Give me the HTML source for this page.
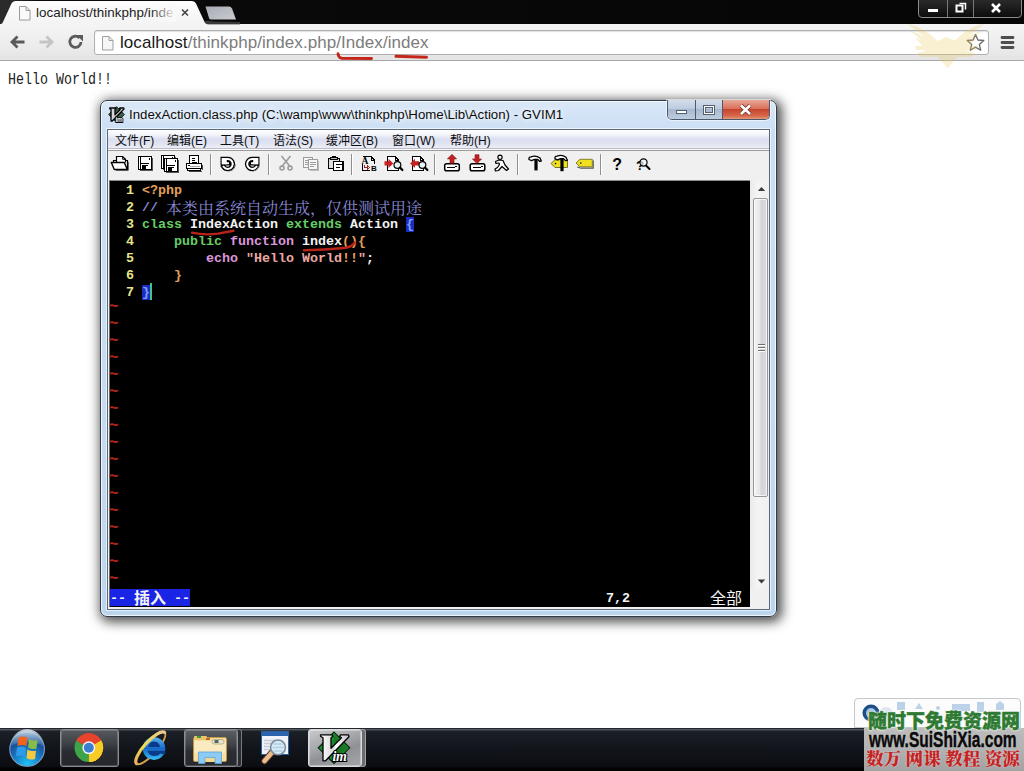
<!DOCTYPE html>
<html><head><meta charset="utf-8"><title>localhost/thinkphp/index.php/Index/index</title>
<style>
*{box-sizing:border-box;margin:0;padding:0}
html,body{width:1024px;height:771px;overflow:hidden;background:#fff}
body{position:relative;font-family:"Liberation Sans","Noto Sans CJK SC",sans-serif}
.a{position:absolute}
svg{position:absolute;overflow:visible}
/* chrome */
#ctitle{left:0;top:0;width:1024px;height:25px;background:linear-gradient(90deg,#2b2b2b 0,#2a2a2a 12px,#0a0a0a 40px,#050505 100%)}
#ctool{left:0;top:24px;width:1024px;height:37px;background:linear-gradient(#f5f5f5,#ececec 60%,#e4e4e4);border-bottom:1px solid #a9a9a9}
#tabtxt{left:36px;top:4px;font-size:13.4px;letter-spacing:.05px;line-height:17px;color:#1c1c1c;white-space:nowrap;width:140px;overflow:hidden}
#tabfade{left:150px;top:3px;width:26px;height:19px;background:linear-gradient(90deg,rgba(249,249,249,0),#f9f9f9)}
#omni{left:94px;top:30px;width:895px;height:25px;background:#fff;border:1px solid #b0b0b0;border-radius:3px;box-shadow:inset 0 1px 1px rgba(0,0,0,.12)}
#url{left:120px;top:33px;font-size:17px;letter-spacing:.06px;color:#1a1a1a;white-space:nowrap;line-height:20px}
#url span{color:#7c7c7c}
#hello{left:8px;top:71px;font-family:"Liberation Mono",monospace;font-size:16px;line-height:18px;color:#222;white-space:pre;transform:scaleX(.8333);transform-origin:0 0}
#wc{left:918px;top:-1px;width:104px;height:19px;border:1px solid #8c8c8c;border-radius:0 0 4px 4px;background:linear-gradient(#2a2a2a,#0c0c0c)}
#wc i{position:absolute;top:0;width:1px;height:17px;background:#7a7a7a}
</style></head><body>
<div id="ctitle" class="a"></div>
<div id="ctool" class="a"></div>
<svg id="tab" style="left:0;top:0" width="240" height="26" viewBox="0 0 240 26"><defs><linearGradient id="tg" x1="0" y1="0" x2="0" y2="1"><stop offset="0" stop-color="#fdfdfd"/><stop offset="1" stop-color="#f3f3f3"/></linearGradient><linearGradient id="ng" x1="0" y1="0" x2="1" y2="1"><stop offset="0" stop-color="#a9acb3"/><stop offset="1" stop-color="#c9cbd1"/></linearGradient></defs><path d="M200 25 Q204 19 214 21.500 L240 22 L240 25Z" fill="#6a6a6a" opacity=".5"/><path d="M0 25 L2.500 23 L11.500 3.500 Q12.500 1 15.500 1 L192 1 Q195 1 196 3.500 L205 23 L208 25 Z" fill="url(#tg)"/><path d="M205.5 6.5 L229 6.5 Q231 6.5 232 8.5 L236 19.5 L211 19.5 Q209.5 19.5 209 18 Z" fill="url(#ng)"/><path d="M182 9.5 L188 15.5 M188 9.5 L182 15.5" stroke="#444" stroke-width="1.6" fill="none"/><path d="M19.5 6.5 h6.5 l4 4 v9.5 h-10.5 z" fill="#fafafa" stroke="#9a9a9a"/><path d="M26 6.5 v4 h4" fill="none" stroke="#9a9a9a"/></svg>
<div id="tabtxt" class="a">localhost/thinkphp/inde</div>
<div id="tabfade" class="a"></div>
<div id="wc" class="a"><i style="left:28px"></i><i style="left:54px"></i></div>
<svg style="left:918px;top:0" width="104" height="18" viewBox="0 0 104 18"><rect x="10" y="9" width="10" height="3" fill="#fff"/><path d="M38.500 5.500 h6 v6 h-6 z" fill="none" stroke="#fff" stroke-width="2"/><path d="M41.500 3.500 h6 v6" fill="none" stroke="#fff" stroke-width="1.500"/><path d="M74 4 L82 12 M82 4 L74 12" stroke="#fff" stroke-width="2.600"/></svg>
<div id="omni" class="a"></div>
<svg style="left:0;top:24px" width="1024" height="37" viewBox="0 24 1024 37">
 <path d="M12 42 H24.500 M17.500 36.500 L12 42 L17.500 47.500" fill="none" stroke="#5a5a5a" stroke-width="2.800"/>
 <path d="M39.500 42 H52 M46.500 36.500 L52 42 L46.500 47.500" fill="none" stroke="#c4c4c4" stroke-width="2.800"/>
 <path d="M81 42 A5.600 5.600 0 1 1 79.500 38" fill="none" stroke="#5a5a5a" stroke-width="2.800"/><path d="M76.500 35 L83 35 L83 41.500 Z" fill="#5a5a5a"/>
 <path d="M102.500 36.500 h6.500 l4 4 v9.500 h-10.500 z" fill="#f6f6f6" stroke="#a0a0a0"/><path d="M109 36.500 v4 h4" fill="none" stroke="#a0a0a0"/>
 <path d="M975.500 34.500 L977.900 40 L983.800 40.500 L979.300 44.400 L980.700 50.200 L975.500 47.100 L970.300 50.200 L971.700 44.400 L967.200 40.500 L973.100 40 Z" fill="#fff" stroke="#6a6a6a" stroke-width="1.300" stroke-linejoin="round"/>
 <path d="M1002 37.500 h11 M1002 42.500 h11 M1002 47.500 h11" stroke="#4e4e4e" stroke-width="2.800" stroke-linecap="round"/>
</svg>
<svg style="left:900px;top:18px" width="96" height="54" viewBox="900 18 96 54"><g fill="#ecc858" opacity=".27"><path d="M907 24 Q926 27 942 46 L937 52 Q924 34 907 24Z"/><path d="M910 31 Q924 33 937 50 L931 53 Q922 39 910 31Z"/><path d="M915 38 Q926 40 933 52 L926 53 Q922 44 915 38Z"/><path d="M985 23.500 Q966 27 950 46 L955 52 Q968 34 985 23.500Z"/><path d="M982 31 Q968 33 955 50 L961 53 Q970 39 982 31Z"/><path d="M977 38 Q966 40 959 52 L966 53 Q970 44 977 38Z"/><path d="M915 46 H978 L976 50 H960 L975 53 L972 57 H920 L917 53 L932 50 H916Z"/><path d="M936 42 L946 37 L958 42 L958 56 L947.500 68 L937 56Z"/></g></svg><div id="url" class="a">localhost<span>/thinkphp/index.php/Index/index</span></div>
<svg style="left:330px;top:50px" width="110" height="14" viewBox="330 50 110 14"><path d="M338 53.800 Q338.500 57.600 341.500 58.200 L371.500 58.500" fill="none" stroke="#c4261a" stroke-width="2.900" stroke-linecap="round"/><path d="M396 56.200 L426.500 57.300" fill="none" stroke="#c4261a" stroke-width="3" stroke-linecap="round"/></svg>
<div id="hello" class="a">Hello World!!</div>

<style>
#shadow{left:100px;top:100px;width:677px;height:517px;border-radius:7px;box-shadow:2.6px 2.6px 12px 2.2px rgba(0,0,0,.7)}
#win{left:100px;top:100px;width:677px;height:517px;border-radius:7px;border:1px solid #2f3b4a;background:linear-gradient(#dbe8f7 0,#d2e3f6 14px,#cddff4 29px,#c6dbf1 60%,#bcd5ee 100%);box-shadow:inset 0 0 0 1px rgba(255,255,255,.75)}
#wtitle{left:129px;top:106px;font-size:12px;line-height:18px;transform:scaleX(1.105);transform-origin:0 0;color:#0c0c0c;white-space:nowrap;text-shadow:0 0 5px #fff,0 0 8px #fff}
#cbtn{left:667px;top:100px;width:103px;height:20px;border:1px solid #4d5a6b;border-top:none;border-radius:0 0 5px 5px;overflow:hidden;box-shadow:0 0 0 1px rgba(255,255,255,.55)}
#cbtn b{position:absolute;top:0;height:19px;display:block}
#client{left:108px;top:130px;width:661px;height:479px;background:#f0f0f0;box-shadow:0 0 0 1px #5a6878,0 0 0 2px rgba(255,255,255,.6)}
#menubar{left:108px;top:130px;width:661px;height:21px;background:linear-gradient(#ffffff 0,#f1f3f9 5px,#dcdff0 9px,#dde1f0 12px,#e6e9f4 16px,#eceef6 18px,#bcbcc8 18px,#bcbcc8 19px,#fafafa 19px,#fafafa 20px,#9c9c9c 20px)}
.mi{position:absolute;top:133px;font-size:12px;color:#0e0e0e;white-space:nowrap;line-height:17px;font-family:"Liberation Sans","Noto Sans CJK SC",sans-serif}
#tbar{left:108px;top:151px;width:661px;height:30px;background:#f0f0f0}
.sep{position:absolute;top:154px;width:2px;height:21px;border-left:1px solid #8e8e8e;border-right:1px solid #fff}
#editor{left:109px;top:180px;width:641px;height:427px;background:#000;border-top:1px solid #8a8a8a;border-left:1px solid #6e6e6e}
#code{left:110px;top:182px;font-family:"Liberation Mono",monospace;font-weight:bold;font-size:13.33px;line-height:17px;color:#f2f2f2;white-space:pre}
#code .n{color:#e6e68a}
#code .o{color:#e2a05c}
#code .c{color:#8a8ad6}
#code .g{color:#66cc66}
#code .p{color:#dc96dc}
#code .s{color:#eaa8a0}
#code .m{background:#1c2cc0;color:#7aa0ff}
#code .k{display:inline-block;width:16px;font-family:"Noto Serif CJK SC","Noto Sans CJK SC",serif;font-weight:400;font-size:16px;line-height:17px;text-align:center;vertical-align:top}
#tildes{left:109px;top:299px;font-family:"Liberation Mono",monospace;font-weight:bold;font-size:16px;line-height:17px;color:#b0261c;white-space:pre}
#mode{left:110px;top:589px;width:80px;height:17px;background:#1a24e4}
.st{position:absolute;top:590px;font-family:"Liberation Mono","Noto Sans CJK SC",monospace;font-weight:bold;font-size:13.33px;line-height:17px;color:#f4f4f4;white-space:pre}
.st .k{position:relative;top:-1px;display:inline-block;width:16px;font-family:"Noto Sans CJK SC",sans-serif;font-weight:400;font-size:16px;line-height:17px;text-align:center;vertical-align:top}
#vsb{left:750px;top:181px;width:19px;height:408px;background:linear-gradient(90deg,#e9e9e9,#f4f4f4 40%,#f0f0f0)}
#thumb{left:753px;top:198px;width:15px;height:299px;border:1px solid #979797;border-radius:2px;background:linear-gradient(90deg,#f4f4f4,#e6e6e8 45%,#d2d3d8 55%,#dcdde2);box-shadow:inset 0 0 0 1px rgba(255,255,255,.7)}
</style>
<div id="shadow" class="a"></div>
<div id="win" class="a"></div>
<svg style="left:108px;top:106px" width="17" height="17" viewBox="-1 -1 34 34"><path d="M16 0.300 L31.700 16 L16 31.700 L0.300 16 Z" fill="#3c5c44" stroke="#10201a" stroke-width="2"/><path d="M2.500 3 H14 L15 4.500 L13 6 V16.500 L23.500 6 L21.500 4.500 L22.500 3 H30.500 L31 5 L7.500 29 H5 V6 L2.500 4.500 Z" fill="#d4d4d4" stroke="#000" stroke-width="2.600" stroke-linejoin="round"/><text x="14" y="30" font-family="Liberation Sans,sans-serif" font-weight="bold" font-size="13" fill="#fff" stroke="#000" stroke-width="3.500" paint-order="stroke" stroke-linejoin="round" letter-spacing="-.5">im</text></svg><div id="wtitle" class="a">IndexAction.class.php (C:\wamp\www\thinkphp\Home\Lib\Action) - GVIM1</div>
<div id="cbtn" class="a"><b style="left:0;width:28px;background:linear-gradient(#d3deeb,#bccbde 45%,#a7b9d0 50%,#becddf);border-right:1px solid #4d5a6b"></b><b style="left:28px;width:27px;background:linear-gradient(#d3deeb,#bccbde 45%,#a7b9d0 50%,#becddf);border-right:1px solid #4d5a6b"></b><b style="left:55px;width:47px;background:linear-gradient(#e8a797,#d9705a 45%,#c6452c 50%,#d8694c 85%,#e29a7c)"></b></div>
<svg style="left:667px;top:100px" width="103" height="20" viewBox="0 0 103 20"><rect x="9.500" y="10.500" width="10" height="3" fill="#fff" stroke="#55606e"/><rect x="36.500" y="5.500" width="11" height="9" fill="none" stroke="#55606e"/><rect x="37.500" y="6.500" width="9" height="7" fill="none" stroke="#fff"/><rect x="38.500" y="7.500" width="7" height="5" fill="none" stroke="#55606e"/><path d="M74 5.500 L83 14 M83 5.500 L74 14" stroke="#6b3328" stroke-width="4.200"/><path d="M74 5.500 L83 14 M83 5.500 L74 14" stroke="#fff" stroke-width="2.600"/></svg>
<div id="client" class="a"></div>
<div id="menubar" class="a"></div>
<span class="mi" style="left:115px">文件(F)</span><span class="mi" style="left:167px">编辑(E)</span><span class="mi" style="left:220px">工具(T)</span><span class="mi" style="left:273px">语法(S)</span><span class="mi" style="left:326px">缓冲区(B)</span><span class="mi" style="left:392px">窗口(W)</span><span class="mi" style="left:450px">帮助(H)</span>
<div id="tbar" class="a"></div>
<i class="sep" style="left:210px"></i><i class="sep" style="left:268px"></i><i class="sep" style="left:351px"></i><i class="sep" style="left:434px"></i><i class="sep" style="left:517px"></i><i class="sep" style="left:600px"></i>
<!--ICONS_START--><svg style="left:108px;top:150px" width="662" height="31" viewBox="108 150 662 31" shape-rendering="crispEdges"><g shape-rendering="auto"><path d="M128.300 162 V170.300 H116" stroke="#555" stroke-width="1" fill="none"/><path d="M113.500 163 V160.500 H116.500" fill="none" stroke="#000" stroke-width="1.200"/><path d="M125.500 160.500 H127.500 V169.500 H125" fill="#fff" stroke="#000" stroke-width="1.200"/><path d="M116.500 162.500 V156.500 H122.700 L125.500 159.300 V162.500" fill="#fff" stroke="#000" stroke-width="1.200"/><path d="M122.700 156.500 V159.300 H125.500" fill="none" stroke="#000" stroke-width="1"/><path d="M111.300 162.500 H124.300 L127.300 169.500 H114.300 Z" fill="#fff" stroke="#000" stroke-width="1.400" stroke-linejoin="round"/></g><g><rect x="138.5" y="156.5" width="13" height="13" fill="#fff" stroke="#000"/><path d="M140.5 157 V169 M141 163.5 H149" stroke="#000" fill="none"/><rect x="142" y="165" width="6" height="4" fill="#000"/><rect x="146" y="166" width="1.5" height="3" fill="#fff"/><rect x="149" y="158" width="1" height="1.5" fill="#000"/><path d="M152.5 158 V170.5 H140" stroke="#555" fill="none"/></g><g><rect x="161.5" y="155.5" width="13" height="13" fill="#fff" stroke="#000"/><path d="M163.5 156 V168 M164 162.5 H172" stroke="#000" fill="none"/><rect x="165" y="164" width="6" height="4" fill="#000"/><rect x="169" y="165" width="1.5" height="3" fill="#fff"/><rect x="172" y="157" width="1" height="1.5" fill="#000"/><path d="M175.5 157 V169.5 H163" stroke="#555" fill="none"/></g><g><rect x="164.5" y="158.5" width="13" height="13" fill="#fff" stroke="#000"/><path d="M166.5 159 V171 M167 165.5 H175" stroke="#000" fill="none"/><rect x="168" y="167" width="6" height="4" fill="#000"/><rect x="172" y="168" width="1.5" height="3" fill="#fff"/><rect x="175" y="160" width="1" height="1.5" fill="#000"/><path d="M178.5 160 V172.5 H166" stroke="#555" fill="none"/></g><g><rect x="189.500" y="155.500" width="9" height="9" fill="#fff" stroke="#000"/><path d="M192 158.500 h3 M192 160.500 h3 M192 162.500 h5" stroke="#000"/><rect x="186.500" y="163.500" width="15" height="5" fill="#fff" stroke="#000" stroke-width="1.300"/><rect x="188" y="165" width="2" height="1" fill="#000"/><path d="M190 166.500 h10" stroke="#aaa"/><rect x="187.500" y="168.500" width="13" height="2" fill="#fff" stroke="#000"/><path d="M202.500 165 V169.500 M201.500 171.500 H189" stroke="#444" fill="none"/></g><g shape-rendering="auto"><path d="M228 163.200 H222.800 V159 H228 A5 5 0 1 1 223.600 166.800" fill="none" stroke="#000" stroke-width="4.600" stroke-linecap="square" stroke-linejoin="miter"/><path d="M228 163.200 H222.800 V159 H228 A5 5 0 1 1 223.600 166.800" fill="none" stroke="#fff" stroke-width="2" stroke-linecap="square"/><rect x="221.800" y="158" width="5" height="6.200" fill="#fff"/><path d="M229.500 171 A7 7 0 0 0 235.300 164.500" fill="none" stroke="#666" stroke-width="1"/></g><g shape-rendering="auto" transform="translate(480,0) scale(-1,1)"><path d="M228 163.200 H222.800 V159 H228 A5 5 0 1 1 223.600 166.800" fill="none" stroke="#000" stroke-width="4.600" stroke-linecap="square" stroke-linejoin="miter"/><path d="M228 163.200 H222.800 V159 H228 A5 5 0 1 1 223.600 166.800" fill="none" stroke="#fff" stroke-width="2" stroke-linecap="square"/><rect x="221.800" y="158" width="5" height="6.200" fill="#fff"/><path d="M226.500 171 A7 7 0 0 1 221 166" fill="none" stroke="#666" stroke-width="1"/></g><g shape-rendering="auto" fill="none" stroke="#9c9c9c" stroke-width="1.600"><path d="M281.500 156 L290.500 167 M290.500 156 L281.500 167"/><circle cx="282" cy="168" r="2"/><circle cx="290" cy="168" r="2"/></g><g><rect x="303.500" y="157.500" width="9" height="10" fill="#f6f6f6" stroke="#9c9c9c"/><path d="M305 160.500 h5 M305 162.500 h5 M305 164.500 h3" stroke="#9c9c9c"/><rect x="308.500" y="159.500" width="9" height="10" fill="#f6f6f6" stroke="#9c9c9c"/><path d="M310 162.500 h6 M310 164.500 h6 M310 166.500 h4" stroke="#9c9c9c"/><path d="M318.500 161 V170.500 H310" stroke="#bdbdbd" fill="none"/></g><g><rect x="328.500" y="158.500" width="11" height="10" fill="#ddd" stroke="#000" stroke-width="1.400"/><rect x="332" y="155.500" width="4" height="2" fill="#000"/><rect x="330.500" y="157.500" width="7" height="2" fill="#bbb" stroke="#000"/><rect x="333.500" y="161.500" width="9.500" height="9" fill="#fff" stroke="#000" stroke-width="1.500"/><path d="M335.500 164.500 h6 M335.500 167.500 h4" stroke="#000" stroke-width="1.400"/></g><g><path d="M363 156.500 H371 L374.500 160 V164" fill="none" stroke="#000"/><path d="M371 156.500 V160 H374.500" fill="none" stroke="#000"/><path d="M362.500 164 V170.500 H370" fill="none" stroke="#000"/><text x="361.500" y="163.500" font-family="Liberation Serif,serif" font-weight="bold" font-size="9.500" fill="#000">A</text><text x="371" y="171" font-family="Liberation Sans,sans-serif" font-weight="bold" font-size="8" fill="#000">B</text><path d="M364.500 165 V167.500 H368 M367 165.500 L369.500 167.500 L367 169.500" fill="none" stroke="#8a2a2a" stroke-width="1.200"/></g><g><path d="M387.5 156.500 H395 L398.5 160 V170.500 H387.5 Z" fill="#fff" stroke="#000"/><path d="M395 156.500 V160 H398.5" fill="none" stroke="#000"/><path d="M384.500 161.200 h4 v-2.400 l4.800 4.600 l-4.800 4.600 v-2.400 h-4z" fill="#c62020" shape-rendering="auto"/><g shape-rendering="auto"><circle cx="397.4" cy="165" r="3.400" fill="#e8f4f0" stroke="#000" stroke-width="1.200"/><path d="M400.0 167.600 L402.4 170" stroke="#000" stroke-width="2.200" stroke-linecap="round"/></g></g><g><path d="M412.5 156.500 H420 L423.5 160 V170.500 H412.5 Z" fill="#fff" stroke="#000"/><path d="M420 156.500 V160 H423.5" fill="none" stroke="#000"/><path d="M419 161.200 h-4 v-2.400 l-4.800 4.600 l4.800 4.600 v-2.400 h4z" fill="#c62020" shape-rendering="auto"/><g shape-rendering="auto"><circle cx="422.4" cy="165" r="3.400" fill="#e8f4f0" stroke="#000" stroke-width="1.200"/><path d="M425.0 167.600 L427.4 170" stroke="#000" stroke-width="2.200" stroke-linecap="round"/></g></g><g><rect x="444.7" y="163.700" width="14.600" height="7" rx="1.800" fill="#fff" stroke="#000" stroke-width="1.500" shape-rendering="auto"/><path d="M447 167.500 h8 M455 166.500 h2" stroke="#000" stroke-width="1.200"/><path d="M452 154.300 l4.600 4.600 h-2.600 v4.300 h-4 v-4.300 h-2.600z" fill="#c62020" stroke="#7a1a1a" stroke-width=".6" shape-rendering="auto"/></g><g><rect x="470.2" y="163.700" width="14.600" height="7" rx="1.800" fill="#fff" stroke="#000" stroke-width="1.500" shape-rendering="auto"/><path d="M472.5 167.500 h8 M480.5 166.500 h2" stroke="#000" stroke-width="1.200"/><path d="M477 163.600 l4.600 -4.600 h-2.600 v-4.300 h-4 v4.300 h-2.600z" fill="#c62020" stroke="#7a1a1a" stroke-width=".6" shape-rendering="auto"/></g><g shape-rendering="auto" fill="#fff" stroke="#000" stroke-width="1.200" stroke-linejoin="round"><circle cx="500" cy="157.300" r="2.100"/><path d="M499 160 L503 160.500 L505 165 L508.500 169 L506.500 170.500 L502 166.500 L498.500 170.500 L495.500 171 L495 169 L497.500 167.500 L499.500 164.500 L499 163 L496 163.500 L495.500 161.500 Z"/></g><g shape-rendering="auto"><path d="M529 159.5 Q528.5 157 531 156.8 Q536 155 540 158 L541.3 161 L539.5 161.3 L537.5 159.3 L534.5 159.3 L531.5 160.6 Z" fill="#fff" stroke="#000" stroke-width="1.300" stroke-linejoin="round"/><rect x="534.4" y="159.4" width="3.200" height="11" fill="#000"/></g><g shape-rendering="auto"><path d="M551 163.500 L555 159.800 H567.500 V167.500 H555 Z" fill="#efe020" stroke="#6a6420" stroke-width=".9"/><circle cx="555.500" cy="163.600" r=".8" fill="#000"/></g><g shape-rendering="auto"><path d="M555 158.8 Q554.5 156.3 557 156.10000000000002 Q562 154.3 566 157.3 L567.3 160.3 L565.5 160.60000000000002 L563.5 158.60000000000002 L560.5 158.60000000000002 L557.5 159.9 Z" fill="#fff" stroke="#000" stroke-width="1.300" stroke-linejoin="round"/><rect x="560.4" y="158.70000000000002" width="3.200" height="12.500" fill="#000"/></g><g shape-rendering="auto"><path d="M577.200 167 L581 168.200 H593.200 V160.500" fill="none" stroke="#555" stroke-width="1.200"/><path d="M576 163 L580 159.300 H592.300 V166.800 H580 Z" fill="#efe020" stroke="#7a7420" stroke-width=".9"/><circle cx="580.800" cy="163" r=".8" fill="#000"/></g><text x="612.300" y="169.800" font-family="Liberation Sans,sans-serif" font-weight="bold" font-size="16" fill="#000">?</text><g shape-rendering="auto"><text x="636" y="170" font-family="Liberation Sans,sans-serif" font-weight="bold" font-size="13" fill="#000">?</text><circle cx="643.500" cy="162.500" r="3.600" fill="#f4f4f4" fill-opacity=".7" stroke="#000" stroke-width="1.200"/><path d="M646 165.500 L649.500 169" stroke="#000" stroke-width="2" stroke-linecap="round"/></g></svg><!--ICONS_END-->
<div id="editor" class="a"></div>
<div id="code" class="a"><span class="n">  1 </span><span class="o">&lt;?php</span>
<span class="n">  2 </span><span class="c">// <span class="k">本</span><span class="k">类</span><span class="k">由</span><span class="k">系</span><span class="k">统</span><span class="k">自</span><span class="k">动</span><span class="k">生</span><span class="k">成</span><span class="k">，</span><span class="k">仅</span><span class="k">供</span><span class="k">测</span><span class="k">试</span><span class="k">用</span><span class="k">途</span></span>
<span class="n">  3 </span><span class="g">class</span> IndexAction <span class="g">extends</span> Action <span class="m">{</span>
<span class="n">  4 </span>    <span class="g">public</span> <span class="p">function</span> index<span class="o">(){</span>
<span class="n">  5 </span>        <span class="p">echo</span> <span class="s">"Hello World<span class="o">!!</span>"</span>;
<span class="n">  6 </span>    <span class="o">}</span>
<span class="n">  7 </span><span class="m">}</span></div>
<div class="a" style="left:150px;top:283px;width:2px;height:17px;background:#45c28a"></div>
<div id="tildes" class="a">~
~
~
~
~
~
~
~
~
~
~
~
~
~
~
~
~</div>
<div id="mode" class="a"></div>
<div class="st" style="left:110px">-- <span class="k" style="font-weight:700">插</span><span class="k" style="font-weight:700">入</span> --</div>
<div class="st" style="left:606px">7,2</div>
<div class="st" style="left:710px"><span class="k">全</span><span class="k">部</span></div>
<svg style="left:185px;top:225px" width="180" height="30" viewBox="185 225 180 30"><path d="M192 232.600 Q205 235.600 218 233.600 Q227 232 233.500 230.800" fill="none" stroke="#b8241a" stroke-width="2.400" stroke-linecap="round"/><path d="M304 250.200 Q325 250 344 248 Q352.500 247 354.600 242.500" fill="none" stroke="#b8241a" stroke-width="2.600" stroke-linecap="round"/></svg>
<div id="vsb" class="a"></div>
<div id="thumb" class="a"></div>
<svg style="left:751px;top:181px" width="19" height="408" viewBox="0 0 19 408"><path d="M6.800 10 L10.500 6 L14.200 10 Z" fill="#3c3c3c"/><path d="M6.800 398.500 L14.200 398.500 L10.500 402.500 Z" fill="#3c3c3c"/><path d="M7 163.500 h7 M7 166.500 h7 M7 169.500 h7" stroke="#6e6e6e" stroke-width="1.200"/><path d="M7 164.500 h7 M7 167.500 h7 M7 170.500 h7" stroke="#fff" stroke-width="1"/></svg>
<!--WIN2-->

<style>
#taskbar{left:0;top:728px;width:1024px;height:43px;background:linear-gradient(#23262b 0,#23262b 1px,#5a6068 1px,#4a5058 2px,#1c2027 3px,#12151b 45%,#0b0d12 39px,#000 40px)}
.tb{position:absolute;top:729px;height:38px;border-radius:3px;border:1px solid #8a8e94}
#tb1{left:60px;width:59px;background:linear-gradient(#565a5f,#3c3f44 40%,#2a2c31 60%,#25272c);box-shadow:inset 0 0 0 1px rgba(255,255,255,.18)}
#tb2{left:184px;width:54px;background:linear-gradient(#5c6065,#404348 40%,#2c2e33 60%,#26282d);box-shadow:inset 0 0 0 1px rgba(255,255,255,.18),4px 0 0 -1px #2a2c30,4px 0 0 0 #777b80}
#tb3{left:308px;width:54px;background:linear-gradient(160deg,#c8cacc,#a4a6a9 40%,#8f9194 60%,#a4a6a9);border-color:#d8dadc;box-shadow:inset 0 0 0 1px rgba(255,255,255,.35),4px 0 0 -1px #6a6c70,4px 0 0 0 #a0a4a8}
#wmbg{left:864px;top:728px;width:160px;height:43px;background:linear-gradient(#bdbdbd,#b2b2b2 50%,#a2a2a2)}
#lang{left:854px;top:698px;width:167px;height:30px;border:1px solid #c4c8cc;border-radius:4px 4px 0 0;background:#fcfcfc}
#wm1{left:868px;top:708px;-webkit-text-stroke:.4px #2f7a33;font-family:"Liberation Sans","Noto Sans CJK SC",sans-serif;font-weight:900;font-size:19px;line-height:28px;color:#2f7a33;white-space:nowrap;letter-spacing:0;text-shadow:0 0 2px #fff,0 0 2px #fff,0 0 3px #e8f4e8}
#wm2{left:869px;top:728px;font-family:"Liberation Sans",sans-serif;font-weight:bold;font-size:22px;line-height:24px;color:#0a0a0a;white-space:nowrap;-webkit-text-stroke:.5px #0a0a0a;transform:scaleX(.705);transform-origin:0 0;text-shadow:0 0 2px #ddd}
#wm3{left:866px;top:747px;font-family:"Liberation Serif","Noto Serif CJK SC",serif;font-weight:900;font-size:17.6px;line-height:24px;color:#c42222;white-space:pre;text-shadow:0 0 2px #ecd0d0}
</style>
<div id="taskbar" class="a"></div>
<div id="tb1" class="tb"></div><div id="tb2" class="tb"></div><div id="tb3" class="tb"></div>
<!--T_S--><svg style="left:0;top:728px" width="400" height="43" viewBox="0 728 400 43">
<defs>
<linearGradient id="vg" x1="0" y1="0" x2="1" y2="0"><stop offset="0" stop-color="#fff"/><stop offset=".45" stop-color="#d8d8d8"/><stop offset=".55" stop-color="#fff"/><stop offset="1" stop-color="#c0c0c0"/></linearGradient>
<radialGradient id="og" cx=".5" cy=".95" r=".95"><stop offset="0" stop-color="#22c4f4"/><stop offset=".35" stop-color="#1788d2"/><stop offset=".7" stop-color="#19529a"/><stop offset="1" stop-color="#2c5a8c"/></radialGradient>
<linearGradient id="og2" x1="0" y1="0" x2="0" y2="1"><stop offset="0" stop-color="#e8f0f8" stop-opacity=".9"/><stop offset="1" stop-color="#9cc0e0" stop-opacity=".15"/></linearGradient>
<linearGradient id="ieg" x1="0" y1="0" x2="0" y2="1"><stop offset="0" stop-color="#5ab4f0"/><stop offset=".5" stop-color="#1668c8"/><stop offset="1" stop-color="#38c0f4"/></linearGradient>
<linearGradient id="ring" x1="0" y1="1" x2="1" y2="0"><stop offset="0" stop-color="#e8b060"/><stop offset=".4" stop-color="#f0dc50"/><stop offset="1" stop-color="#e8c890"/></linearGradient>
</defs>
<!-- orb -->
<circle cx="27.100" cy="749" r="18.200" fill="#0c1a30"/><circle cx="27.100" cy="749" r="17.300" fill="url(#og)" stroke="#7f9cbc" stroke-width="1.100"/>
<path d="M10.500 746 A16.700 16.700 0 0 1 43.900 746 Q27 738 10.500 746Z" fill="url(#og2)"/>
<path d="M18.500 737.500 Q23 735.500 27.500 738 L26.500 746 Q22 744 17.500 746 Z" fill="#f0641e"/>
<path d="M29 739 Q33 741.500 37.500 740 L36.500 748.500 Q32 750 28 747.500 Z" fill="#86bc48"/>
<path d="M17 747.500 Q21.500 745.500 26 748 L25 756.500 Q20.500 754.500 16 756.500 Z" fill="#2f9be8"/>
<path d="M27.500 749.500 Q31.500 752 36 750.500 L35 759 Q30.500 760.500 26.500 758 Z" fill="#f7c93c"/>
<!-- chrome -->
<g transform="translate(88.800,747.700)">
<circle r="14.600" fill="#1a1a1a" opacity=".5" cy=".8"/>
<path d="M0 0 L-12.470 -7.200 A14.400 14.400 0 0 1 12.470 -7.200 Z" fill="#e8432d"/>
<path d="M0 0 L12.470 -7.200 A14.400 14.400 0 0 1 0 14.400 Z" fill="#f9cb25"/>
<path d="M0 0 L0 14.400 A14.400 14.400 0 0 1 -12.470 -7.200 Z" fill="#3fa34a"/>
<path d="M-12.470 -7.200 A14.400 14.400 0 0 1 12.470 -7.200 L5.500 -3.200 L-5.500 -3.200Z" fill="#e8432d"/>
<path d="M12.470 -7.200 L5.500 -3.200 L0 6.300 L0 14.400 A14.400 14.400 0 0 0 12.470 -7.200Z" fill="#f9cb25"/>
<circle r="6.400" fill="#f4f8fc"/><circle r="5" fill="#3b7dd0"/>
</g>
<!-- IE -->
<g>
<ellipse cx="150.500" cy="748" rx="21" ry="6.500" transform="rotate(-48 150.500 748)" fill="none" stroke="#d9a24e" stroke-width="1.800"/>
<circle cx="154" cy="748.600" r="11.300" fill="url(#ieg)"/>
<path d="M148 747 H160 Q159 741.500 154 741.500 Q149.500 741.500 148 747Z M147.500 750.800 Q149 756 154.500 756 Q158 756 160.500 753.500 L165 754.500 L165.500 750.800Z" fill="#0c3a8a"/>
<path d="M136.450 763.600 A21 6.500 -48 0 1 164.550 732.400" fill="none" stroke="url(#ring)" stroke-width="3.200" stroke-linecap="round"/>
</g>
<!-- explorer -->
<g>
<rect x="193.500" y="737.500" width="33" height="24" rx="1.500" fill="#f6dfa0" stroke="#c89840" stroke-width=".8"/>
<rect x="194" y="736" width="13" height="4" rx="1" fill="#e8c46a"/><rect x="197" y="736" width="4" height="2" fill="#3c9a3c"/><rect x="206" y="738" width="4" height="2" fill="#c86420"/>
<rect x="194.500" y="741" width="31" height="12" fill="#faeac0"/>
<rect x="212" y="739.500" width="12" height="4.500" rx="2" fill="#e8e4d0" stroke="#a09060" stroke-width=".6"/><rect x="214.500" y="740" width="4" height="3" fill="#566"/>
<path d="M198.500 752 H221.500 V763.500 H215 V757.500 H205 V763.500 H198.500Z" fill="#8ecbf2" stroke="#5aa0d8" stroke-width=".8"/>
<rect x="205.500" y="758" width="9" height="4" fill="#f0d890"/>
</g>
<!-- magnifier -->
<g>
<rect x="261.500" y="731.500" width="27" height="23" fill="#eef3fa" stroke="#2c5c9c" stroke-width="1"/>
<rect x="261.500" y="731.500" width="27" height="4.500" fill="#2b63ac"/>
<path d="M264 740.500 h12 M264 743.500 h10 M264 746.500 h10 M264 749.500 h11" stroke="#c8ccd4" stroke-width="1.500"/>
<path d="M272 752.500 L264.500 761" stroke="#4a3020" stroke-width="6.500" stroke-linecap="round"/>
<path d="M272 752.500 L264.500 761" stroke="#ecbc8c" stroke-width="4.600" stroke-linecap="round"/>
<circle cx="278" cy="747.400" r="7.400" fill="#d4eaf6" stroke="#7c8c9c" stroke-width="1.600"/>
<path d="M273.500 744 h9 M272.500 747.500 h11 M273.500 751 h9" stroke="#b4d0e4" stroke-width="1.300"/>
</g>
<!-- vim -->
<g transform="translate(318,731.800)"><g id="vimlogo"><path d="M16 0.300 L31.700 16 L16 31.700 L0.300 16 Z" fill="#1d8a2c" stroke="#0a2a0e" stroke-width="1.200"/><path d="M16 3 L29 16 L16 29 Z" fill="#156a20" opacity=".55"/><path d="M2.500 3 H14 L15 4.500 L13 6 V16.500 L23.500 6 L21.500 4.500 L22.500 3 H30.500 L31 5 L7.500 29 H5 V6 L2.500 4.500 Z" fill="url(#vg)" stroke="#000" stroke-width="1.300" stroke-linejoin="round"/><text x="14.500" y="29" font-family="Liberation Serif,serif" font-style="italic" font-weight="bold" font-size="14" fill="#fff" stroke="#000" stroke-width="2.200" paint-order="stroke" stroke-linejoin="round" letter-spacing="-.3">im</text></g></g>
</svg><!--T_E-->
<div id="lang" class="a"></div>
<svg style="left:854px;top:698px" width="167" height="30" viewBox="854 698 167 30"><circle cx="871" cy="713" r="8.500" fill="#1d4f86"/><circle cx="871" cy="713" r="5" fill="#9ec4e4"/><circle cx="886" cy="714" r="7" fill="#dfe6ee"/><path d="M897 702 h8 v8 h-8z M919 703 l4 6 h-8z M938 706 a2 2 0 1 0 .1 0z M952 704 h18 v7 h-18z M977 702 h7 v10 h-7z M996 704 l4 -3 l4 3 v6 h-8z" fill="#6f9fd0" opacity=".45"/></svg><div id="wmbg" class="a"></div>
<div id="wm1" class="a">随时下免费资源网</div>
<div id="wm2" class="a">www.SuiShiXia.com</div>
<div id="wm3" class="a">数万 网课 教程 资源</div>

</body></html>
